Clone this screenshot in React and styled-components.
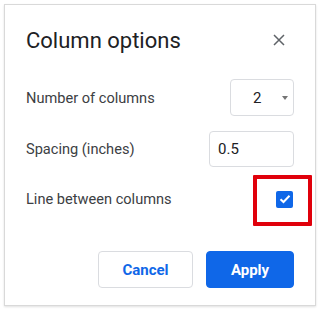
import React from "react";
import styled, { createGlobalStyle } from "styled-components";

const Global = createGlobalStyle`
  html, body { margin: 0; padding: 0; background: #fff; }
  body { font-family: Roboto, "Liberation Sans", Arial, sans-serif; color: #202124; }
`;

const Dialog = styled.div`
  position: relative;
  box-sizing: border-box;
  margin: 4px;
  width: 312px;
  height: 302px;
  border: 1px solid #d9d9d9;
  box-shadow: 0 1px 2px rgba(0, 0, 0, 0.12);
  background: #fff;
  padding: 19px 21px 17px 21px;
  display: flex;
  flex-direction: column;
`;

const Header = styled.div`
  height: 32px;
  display: flex;
  align-items: center;
  justify-content: space-between;
`;

const Title = styled.h1`
  margin: 0;
  font-family: Roboto, "Liberation Sans", sans-serif;
  font-weight: 400;
  font-size: 22px;
  color: #202124;
`;

const CloseButton = styled.button`
  border: 0;
  background: transparent;
  padding: 0;
  width: 14px;
  height: 14px;
  margin-right: 8px;
  display: flex;
  align-items: center;
  justify-content: center;
  cursor: pointer;
`;

const Row = styled.div`
  display: flex;
  align-items: center;
  justify-content: space-between;
  height: ${(p) => p.$h}px;
  margin-top: ${(p) => p.$mt}px;
`;

const Label = styled.span`
  font-size: 14.6px;
  color: #3c4043;
`;

const SelectBox = styled.div`
  box-sizing: border-box;
  width: 64px;
  height: 37px;
  border: 1px solid #dadce0;
  border-radius: 4px;
  display: flex;
  align-items: center;
  padding-left: 22px;
  font-size: 15px;
  color: #202124;
`;

const Arrow = styled.span`
  margin-left: 21px;
  width: 0;
  height: 0;
  border-left: 3px solid transparent;
  border-right: 3px solid transparent;
  border-top: 4px solid #757575;
`;

const TextInput = styled.input`
  box-sizing: border-box;
  width: 85px;
  height: 36px;
  border: 1px solid #dadce0;
  border-radius: 4px;
  padding: 0 0 0 8px;
  font-family: Roboto, "Liberation Sans", sans-serif;
  font-size: 15px;
  color: #202124;
  outline: none;
`;

const CheckBox = styled.div`
  width: 17px;
  height: 17px;
  border-radius: 2px;
  background: #0f67e8;
  margin-right: 1px;
  display: flex;
  align-items: center;
  justify-content: center;
`;

const Highlight = styled.div`
  position: absolute;
  box-sizing: border-box;
  left: 248px;
  top: 170px;
  width: 59px;
  height: 51px;
  border: 4px solid #e0000b;
  border-radius: 1px;
  pointer-events: none;
`;

const Footer = styled.div`
  display: flex;
  justify-content: flex-end;
  gap: 13px;
  margin-top: 34px;
`;

const Button = styled.button`
  box-sizing: border-box;
  height: 37px;
  width: ${(p) => p.$w}px;
  border-radius: 4px;
  font-family: Roboto, "Liberation Sans", sans-serif;
  font-size: 15px;
  font-weight: 700;
  cursor: pointer;
  border: 1px solid ${(p) => (p.$primary ? "#0f67e8" : "#dadce0")};
  background: ${(p) => (p.$primary ? "#0f67e8" : "#fff")};
  color: ${(p) => (p.$primary ? "#fff" : "#0f67e8")};
`;

export default function App() {
  return (
    <>
      <Global />
      <Dialog>
        <Header>
          <Title>Column options</Title>
          <CloseButton aria-label="Close">
            <svg width="12" height="12" viewBox="0 0 12 12">
              <path d="M1 1L11 11M11 1L1 11" stroke="#5f6368" strokeWidth="1.5" />
            </svg>
          </CloseButton>
        </Header>
        <Row $h={37} $mt={23}>
          <Label>Number of columns</Label>
          <SelectBox>
            2<Arrow />
          </SelectBox>
        </Row>
        <Row $h={36} $mt={15}>
          <Label>Spacing (inches)</Label>
          <TextInput defaultValue="0.5" />
        </Row>
        <Row $h={36} $mt={14}>
          <Label>Line between columns</Label>
          <CheckBox>
            <svg width="12" height="10" viewBox="0 0 12 10">
              <path d="M1.5 5.2L4.5 8L10.5 1.8" stroke="#fff" strokeWidth="2" fill="none" />
            </svg>
          </CheckBox>
        </Row>
        <Footer>
          <Button $w={95}>Cancel</Button>
          <Button $w={88} $primary>Apply</Button>
        </Footer>
        <Highlight />
      </Dialog>
    </>
  );
}
